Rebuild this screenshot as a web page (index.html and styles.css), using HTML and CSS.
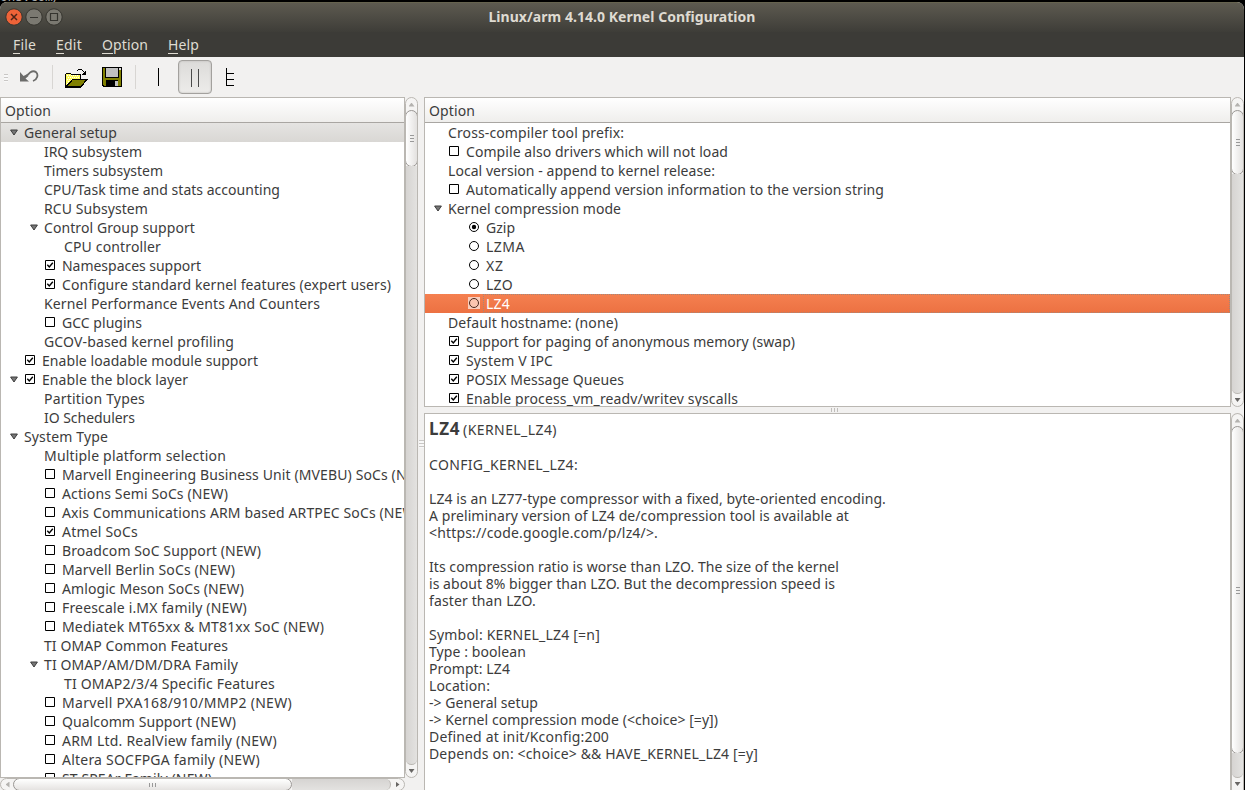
FILE: index.html
```html
<!DOCTYPE html>
<html lang="en">
<head>
<meta charset="utf-8">
<title>Linux/arm 4.14.0 Kernel Configuration</title>
<link rel="stylesheet" href="styles.css">
</head>
<body>
<div class="backdrop"><span data-w="60">ons.com/</span></div>
<div class="window">
  <header class="titlebar">
    <div class="buttons">
      <svg class="wbtn close" viewBox="0 0 18 18"><circle cx="9" cy="9" r="8.2"/><path d="M6 6l6 6M12 6l-6 6"/></svg>
      <svg class="wbtn" viewBox="0 0 18 18"><circle cx="9" cy="9" r="8.2"/><path d="M5 9.5h8"/></svg>
      <svg class="wbtn" viewBox="0 0 18 18"><circle cx="9" cy="9" r="8.2"/><path d="M5.5 5.5h7v7h-7z"/></svg>
    </div>
    <h1><span data-w="267">Linux/arm 4.14.0 Kernel Configuration</span></h1>
  </header>
  <nav class="menubar">
    <span class="menu file" data-w="23"><u>F</u>ile</span>
    <span class="menu edit" data-w="26"><u>E</u>dit</span>
    <span class="menu option" data-w="46"><u>O</u>ption</span>
    <span class="menu help" data-w="31"><u>H</u>elp</span>
  </nav>
  <div class="toolbar">
    <i class="grip"></i>
    <svg class="tool undo" width="20" height="14" viewBox="0 0 20 14"><path class="tip" d="M0 2v9.500h9L5.500 8.500 8.500 6 7 4.200 3.500 6z"/><path class="curve" d="M7 5.500L10.500 2.200C12 1.200 14.500 1 16.200 2.300C18.500 4.500 17.500 9.500 13 11"/></svg>
    <i class="sep s1"></i>
    <svg class="tool open" width="23" height="19" viewBox="0 0 23 19" shape-rendering="crispEdges">
      <path fill="#fffc5c" stroke="#000" d="M.5 17.500v-12l1-1h4l1 1h8.500v5h-7z"/>
      <path fill="none" stroke="#fff" stroke-dasharray="1 1" d="M2 6.500h12M3 8.500h12M2 10.500h6M3 12.500h3M2 14.500h2"/>
      <path fill="#808000" stroke="#000" stroke-width="1.300" d="M.8 18L7.500 10.500h14.500L15.500 18z"/>
      <path fill="none" stroke="#000" d="M11.500 2.500l2-2h3l3 3"/><path d="M21 1v5h-5z"/>
    </svg>
    <svg class="tool save" width="20" height="20" viewBox="0 0 20 20" shape-rendering="crispEdges">
      <path d="M0 0h20v20H1l-1-1z"/><path fill="#808000" d="M1 1h18v17l-1 1H2l-1-1z"/>
      <path d="M3 0h14v11H3z"/><path fill="#c0c0c0" d="M4 1h12v9H4z"/><path fill="#ddd" d="M17 1h2v2h-2z"/>
      <path d="M4 13h12v7H4z"/><path fill="#c0c0c0" d="M13 14h3v5h-3z"/>
    </svg>
    <i class="sep s2"></i>
    <i class="single"></i>
    <span class="split"><i></i><i></i></span>
    <svg class="tool full" width="9" height="18" viewBox="0 0 9 18" shape-rendering="crispEdges"><path fill="none" stroke="#000" d="M.5 0v18M0 5.500h8M0 11.500h8M0 17.500h8"/></svg>
  </div>
  <main class="content">
    <section class="left">
      <div class="leftmain">
        <div class="view"><div class="head"><span data-w="46">Option</span></div><div class="tree" id="menus"></div></div>
        <div class="vbar"><b class="up off"></b><i class="thumb t1"></i><i class="trough"></i><b class="down"></b></div>
      </div>
      <div class="hbar"><b class="prev off"></b><i class="thumb"></i><i class="trough"></i><b class="next"></b></div>
    </section>
    <div class="vsplit"><i></i></div>
    <section class="right">
      <div class="rtop">
        <div class="view"><div class="head"><span data-w="46">Option</span></div><div class="tree" id="options"></div></div>
        <div class="vbar"><b class="up off"></b><i class="thumb t2"></i><i class="trough"></i><b class="down"></b></div>
      </div>
      <div class="hsplit"><i></i><i></i><i></i></div>
      <div class="rbot">
        <div class="view info" id="info"></div>
        <div class="vbar"><b class="up off"></b><i class="thumb t3"></i><i class="trough"></i><b class="down"></b></div>
      </div>
    </section>
  </main>
</div>
<script src="app.js"></script>
</body>
</html>
```

FILE: styles.css
```css
* { box-sizing: border-box; }
body { margin: 0; width: 1245px; height: 790px; overflow: hidden; background: #000; color: #3c3c3c; font: 14px/19px "Noto Sans", "Open Sans", sans-serif; }
[data-w] { display: inline-block; white-space: pre; }
.backdrop { height: 2px; overflow: hidden; color: #aaa; font: 13px/15px "DejaVu Sans Mono", monospace; display: flex; align-items: flex-end; }
.backdrop span { margin-bottom: -2px; }
.window { width: 1244px; height: 788px; display: flex; flex-direction: column; border-radius: 7px 7px 0 0; overflow: hidden; background: #f2f1f0; }
.titlebar { height: 30px; flex: none; display: grid; grid-template-columns: 70px 1fr 70px; background: linear-gradient(#5d5a50, #3e3d38); border-top: 1px solid #66634f; }
.buttons { display: flex; gap: 2px; padding: 5px 0 0 5px; }
.wbtn { width: 18px; height: 18px; }
.wbtn circle { fill: #7b7971; stroke: #36352f; }
.wbtn path { fill: none; stroke: #35342f; stroke-width: 1.2; }
.wbtn.close circle { fill: #ee6338; }
.wbtn.close path { stroke: #4c2417; stroke-width: 1.5; }
h1 { margin: 0; padding-top: 4px; font-size: 14px; line-height: 19px; font-weight: 700; color: #dfdbd2; text-align: center; }
.menubar { height: 25px; flex: none; display: flex; background: #3c3b37; color: #dfdbd2; padding: 3px 0 0 13px; }
.menu { flex: none; height: 20px; }
.menu u { display: inline-block; height: 19px; text-decoration: none; border-bottom: 1px solid #dfdbd2; }
.edit { margin-left: 20px; }
.option { margin-left: 20px; }
.help { margin-left: 20px; }
.toolbar { height: 40px; flex: none; display: flex; align-items: flex-start; background: #f2f1f0; }
.grip { width: 4px; height: 8px; margin: 17px 0 0 4px; background: repeating-linear-gradient(#c9c7c5 0 1px, #f8f8f8 1px 3px); }
.tool { flex: none; display: block; }
.undo { margin: 13px 0 0 12px; }
.undo .tip { fill: #6c6c6a; }
.undo .curve { fill: none; stroke: #6c6c6a; stroke-width: 1.8; }
.sep { width: 1px; height: 24px; margin-top: 8px; background: #d8d6d3; }
.s1 { margin-left: 12px; }
.open { margin: 12px 0 0 12px; }
.save { margin: 10px 0 0 14px; }
.s2 { margin-left: 13px; }
.single { width: 1px; height: 18px; margin: 11px 0 0 22px; background: #000; }
.split { width: 34px; height: 34px; margin: 3px 0 0 19px; display: flex; justify-content: center; gap: 6px; padding-top: 8px; border: 1px solid #a3a19e; border-radius: 4px; background: linear-gradient(#dcdbd9, #edecea); box-shadow: inset 0 0 2px #b5b3b0; }
.split i { width: 1px; height: 18px; background: #4a4a4a; }
.full { margin: 11px 0 0 14px; }
.content { flex: 1; min-height: 0; display: flex; }
.left { width: 418px; display: flex; flex-direction: column; }
.leftmain { height: 681px; display: flex; }
.view { flex: 1; min-width: 0; display: flex; flex-direction: column; background: #fff; border: 1px solid #bab7b2; overflow: hidden; }
.head { height: 25px; flex: none; padding: 3px 0 0 4px; background: linear-gradient(#fff, #efeeec); border-bottom: 1px solid #a9a6a2; }
.tree { flex: 1; overflow: hidden; }
.row { height: 19px; display: flex; }
.row.current { background: linear-gradient(#e5e4e2, #d9d7d4); }
.indent, .label { flex: none; }
.slot { width: 15px; flex: none; }
.arrow { display: block; width: 8px; height: 7px; margin: 6px 0 0 .5px; }
.mark { flex: none; width: 10px; height: 10px; margin: 4px 7px 0 1px; overflow: visible; }
.mark path, .mark circle { fill: #fff; stroke: #000; }
.mark .tick { fill: none; stroke-width: 1.4; }
.mark .dot { fill: #000; stroke: none; }
.row.selected { background: linear-gradient(#f58050, #ec7142); color: #fff; }
.row.selected .mark { background: #f9cdbc; box-shadow: 0 0 0 1px #f9cdbc; }
.row.selected .mark circle { fill: #fbc5af; stroke: #4b2a1e; }
.row.selected .label { flex: 1; border: 1px dotted #a3877a; margin-left: -3px; padding-left: 2px; line-height: 17px; }
.vbar { width: 13px; flex: none; display: flex; flex-direction: column; border: 1px solid #bab7b2; border-radius: 7px; background: #f5f4f3; overflow: hidden; }
.vbar .thumb { flex: none; margin: -1px; border: 1px solid #999693; border-radius: 7px; background: repeating-linear-gradient(#999 0 1px, #fff0 1px 3px) center / 4px 7px no-repeat, linear-gradient(90deg, #fff, #e3e1df); }
.t1 { height: 57px; }
.t2 { height: 65px; }
.t3 { height: 328px; }
.trough { flex: 1; }
.vbar .trough { background: linear-gradient(90deg, #d6d4d2, #e3e2e0); border-bottom: 1px solid #bab7b2; border-radius: 0 0 7px 7px; }
.vbar b, .hbar b { flex: none; width: 11px; height: 12px; display: grid; place-items: center; }
.vbar .up { height: 13px; }
.vbar b::after, .hbar b::after { content: ""; width: 6px; height: 4px; background: #686664; }
.up::after { clip-path: polygon(50% 0, 100% 100%, 0 100%); }
.down::after { clip-path: polygon(0 0, 100% 0, 50% 100%); }
.vbar .off::after, .hbar .off::after { background: #b4b2af; }
.hbar { width: 405px; height: 13px; flex: none; display: flex; border: 1px solid #bab7b2; border-radius: 7px; background: #f5f4f3; overflow: hidden; }
.hbar .thumb { width: 279px; margin: -1px 0 -1px -1px; border: 1px solid #999693; border-radius: 7px; background: repeating-linear-gradient(90deg, #999 0 1px, #fff0 1px 3px) center / 7px 4px no-repeat, linear-gradient(#fff, #e5e3e1); }
.hbar .trough { background: linear-gradient(#d6d4d2, #e3e2e0); border-right: 1px solid #bab7b2; border-radius: 0 7px 7px 0; }
.hbar b { width: 13px; height: 11px; }
.hbar b::after { width: 4px; height: 6px; }
.prev::after { clip-path: polygon(0 50%, 100% 0, 100% 100%); }
.next::after { clip-path: polygon(0 0, 100% 50%, 0 100%); }
.vsplit { width: 6px; flex: none; display: grid; place-items: center; }
.vsplit i { width: 5px; height: 8px; background: repeating-linear-gradient(#c9c7c5 0 1px, #f8f8f8 1px 3px); }
.right { flex: 1; min-width: 0; display: flex; flex-direction: column; }
.rtop { height: 310px; flex: none; display: flex; }
.hsplit { height: 6px; flex: none; display: flex; gap: 2px; justify-content: center; padding-top: 1px; }
.hsplit i { width: 1px; height: 4px; background: #c0bebb; }
.rbot { flex: 1; min-height: 0; display: flex; }
.rbot .vbar { border-bottom: 0; border-radius: 7px 7px 0 0; }
.info { padding: 4px 0 0 4px; border-bottom: 0; }
.title { height: 38px; flex: none; display: flex; align-items: baseline; gap: 3px; line-height: 22px; }
.title strong { font-size: 17px; }
.line { height: 17px; flex: none; line-height: 17px; }
```

FILE: app.js
```js
// Each row: [level, expander, mark, label, label width]
const menus = [
  [0, 1, '', 'General setup', 93],
  [1, 0, '', 'IRQ subsystem', 98],
  [1, 0, '', 'Timers subsystem', 119],
  [1, 0, '', 'CPU/Task time and stats accounting', 236],
  [1, 0, '', 'RCU Subsystem', 104],
  [1, 1, '', 'Control Group support', 151],
  [2, 0, '', 'CPU controller', 97],
  [1, 0, 'on', 'Namespaces support', 139],
  [1, 0, 'on', 'Configure standard kernel features (expert users)', 329],
  [1, 0, '', 'Kernel Performance Events And Counters', 276],
  [1, 0, 'off', 'GCC plugins', 80],
  [1, 0, '', 'GCOV-based kernel profiling', 190],
  [0, 0, 'on', 'Enable loadable module support', 216],
  [0, 1, 'on', 'Enable the block layer', 146],
  [1, 0, '', 'Partition Types', 101],
  [1, 0, '', 'IO Schedulers', 91],
  [0, 1, '', 'System Type', 84],
  [1, 0, '', 'Multiple platform selection', 182],
  [1, 0, 'off', 'Marvell Engineering Business Unit (MVEBU) SoCs (NEW)', 370],
  [1, 0, 'off', 'Actions Semi SoCs (NEW)', 166],
  [1, 0, 'off', 'Axis Communications ARM based ARTPEC SoCs (NEW)', 358],
  [1, 0, 'on', 'Atmel SoCs', 76],
  [1, 0, 'off', 'Broadcom SoC Support (NEW)', 199],
  [1, 0, 'off', 'Marvell Berlin SoCs (NEW)', 173],
  [1, 0, 'off', 'Amlogic Meson SoCs (NEW)', 182],
  [1, 0, 'off', 'Freescale i.MX family (NEW)', 185],
  [1, 0, 'off', 'Mediatek MT65xx & MT81xx SoC (NEW)', 262],
  [1, 0, '', 'TI OMAP Common Features', 184],
  [1, 1, '', 'TI OMAP/AM/DM/DRA Family', 194],
  [2, 0, '', 'TI OMAP2/3/4 Specific Features', 211],
  [1, 0, 'off', 'Marvell PXA168/910/MMP2 (NEW)', 230],
  [1, 0, 'off', 'Qualcomm Support (NEW)', 174],
  [1, 0, 'off', 'ARM Ltd. RealView family (NEW)', 215],
  [1, 0, 'off', 'Altera SOCFPGA family (NEW)', 198],
  [1, 0, 'off', 'ST SPEAr Family (NEW)', 150]
];
const options = [
  [0, 0, '', 'Cross-compiler tool prefix:', 176],
  [0, 0, 'off', 'Compile also drivers which will not load', 262],
  [0, 0, '', 'Local version - append to kernel release:', 267],
  [0, 0, 'off', 'Automatically append version information to the version string', 418],
  [0, 1, '', 'Kernel compression mode', 173],
  [1, 0, 'picked', 'Gzip', 29],
  [1, 0, 'radio', 'LZMA', 39],
  [1, 0, 'radio', 'XZ', 18],
  [1, 0, 'radio', 'LZO', 27],
  [1, 0, 'radio', 'LZ4', 24],
  [0, 0, '', 'Default hostname: (none)', 170],
  [0, 0, 'on', 'Support for paging of anonymous memory (swap)', 329],
  [0, 0, 'on', 'System V IPC', 87],
  [0, 0, 'on', 'POSIX Message Queues', 158],
  [0, 0, 'on', 'Enable process_vm_readv/writev syscalls', 272]
];
const info = [
  ['CONFIG_KERNEL_LZ4:', 149], null,
  ['LZ4 is an LZ77-type compressor with a fixed, byte-oriented encoding.', 457],
  ['A preliminary version of LZ4 de/compression tool is available at', 420],
  ['<https://code.google.com/p/lz4/>.', 229], null,
  ['Its compression ratio is worse than LZO. The size of the kernel', 410],
  ['is about 8% bigger than LZO. But the decompression speed is', 406],
  ['faster than LZO.', 107], null,
  ['Symbol: KERNEL_LZ4 [=n]', 171],
  ['Type : boolean', 97],
  ['Prompt: LZ4', 81],
  ['Location:', 61],
  ['-> General setup', 109],
  ['-> Kernel compression mode (<choice> [=y])', 289],
  ['Defined at init/Kconfig:200', 180],
  ['Depends on: <choice> && HAVE_KERNEL_LZ4 [=y]', 329]
];
const esc = s => s.replace(/&/g, '&amp;').replace(/</g, '&lt;');
const arrow = '<svg class="arrow" viewBox="0 0 8 7"><path fill="#777" stroke="#3c3c3c" d="M.6 1h6.800L4 6z"/></svg>';
const box = '<path d="M.5.5h9v9h-9z"/>';
const ring = '<circle cx="5" cy="5" r="4.500"/>';
const shapes = {
  on: box + '<path class="tick" d="M2.300 4.800l2 2.200 3.500-4.300"/>',
  off: box,
  radio: ring,
  picked: ring + '<circle class="dot" cx="5" cy="5" r="2.200"/>'
};
function rows(list, state) {
  return list.map(([level, open, mark, label, w], i) =>
    `<div class="row ${state[i] || ''}"><span class="indent" style="width:${8 + level * 20}px"></span>` +
    `<span class="slot">${open ? arrow : ''}</span>` +
    (mark ? `<svg class="mark" viewBox="0 0 10 10">${shapes[mark]}</svg>` : '') +
    `<span class="label"><span data-w="${w}">${esc(label)}</span></span></div>`).join('');
}
document.getElementById('menus').innerHTML = rows(menus, { 0: 'current' });
document.getElementById('options').innerHTML = rows(options, { 9: 'selected' });
document.getElementById('info').innerHTML =
  '<div class="title"><strong data-w="31">LZ4</strong><span data-w="94">(KERNEL_LZ4)</span></div>' +
  info.map(l => `<div class="line">${l ? `<span data-w="${l[1]}">${esc(l[0])}</span>` : ''}</div>`).join('');

// Track each label to its nominal width.
document.querySelectorAll('[data-w]').forEach(el => {
  const gap = (el.dataset.w - el.getBoundingClientRect().width) / el.textContent.length;
  el.style.letterSpacing = gap.toFixed(3) + 'px';
});
```
